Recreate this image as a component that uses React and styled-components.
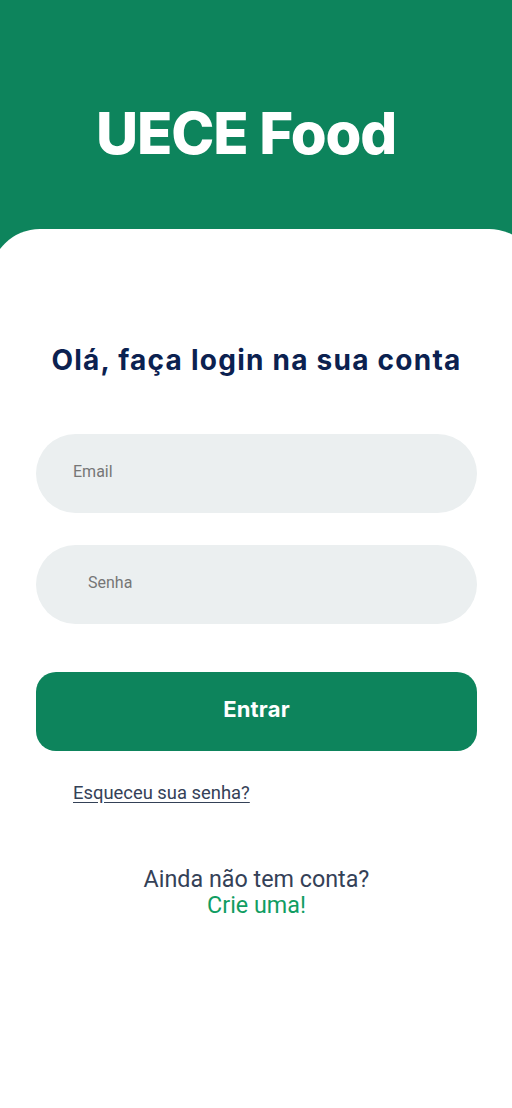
import React from "react";
import styled, { createGlobalStyle } from "styled-components";

const Global = createGlobalStyle`
  html, body { margin: 0; padding: 0; background: #ffffff; }
  body { font-family: Roboto, "Liberation Sans", sans-serif; overflow-x: hidden; }
  * { box-sizing: border-box; }
`;

const Page = styled.div`
  width: 512px;
  min-height: 1108px;
  background: #0d845c;
  display: flex;
  flex-direction: column;
  overflow: hidden;
`;

const Header = styled.header`
  height: 229px;
  padding: 98px 0 0 96px;
`;

const Brand = styled.h1`
  margin: 0;
  font-family: Inter, "Noto Sans", sans-serif;
  font-weight: 800;
  font-size: 58px;
  line-height: 70px;
  letter-spacing: -1.1px;
  color: #ffffff;
`;

const Panel = styled.main`
  flex: 1;
  margin: 0 -27px 0 -10px;
  padding: 0 62px 0 46px;
  background: #ffffff;
  border-radius: 50px 50px 0 0;
  display: flex;
  flex-direction: column;
`;

const Heading = styled.h2`
  margin: 111px 0 0;
  text-align: center;
  font-family: Inter, "Noto Sans", sans-serif;
  font-weight: 700;
  font-size: 28px;
  line-height: 40px;
  letter-spacing: 1.25px;
  color: #0b2150;
`;

const Form = styled.form`
  margin-top: 54px;
  display: flex;
  flex-direction: column;
`;

const Field = styled.input`
  height: 79px;
  border: none;
  outline: none;
  border-radius: 40px;
  background: #ebeff0;
  padding: 0 20px 4px ${(p) => p.$indent}px;
  font-family: Roboto, "Liberation Sans", sans-serif;
  font-size: 16px;
  color: #333;
  margin-bottom: ${(p) => p.$after}px;
  &::placeholder { color: #767676; }
`;

const Submit = styled.button`
  height: 79px;
  border: none;
  border-radius: 20px;
  background: #0d845c;
  color: #ffffff;
  font-family: Inter, "Noto Sans", sans-serif;
  font-weight: 700;
  font-size: 22px;
  letter-spacing: 0.2px;
  padding-bottom: 6px;
  cursor: pointer;
`;

const Forgot = styled.a`
  margin: 30px 0 0 37px;
  align-self: flex-start;
  font-family: Roboto, "Liberation Sans", sans-serif;
  font-size: 18.4px;
  line-height: 24px;
  color: #344157;
  text-decoration: underline;
  text-underline-offset: 3px;
`;

const SignUp = styled.p`
  margin: 61px 0 0;
  text-align: center;
  font-family: Roboto, "Liberation Sans", sans-serif;
  font-weight: 400;
  font-size: 23.3px;
  line-height: 26px;
  color: #344157;
`;

const SignUpLink = styled.a`
  display: block;
  color: #109d62;
  text-decoration: none;
`;

export default function App() {
  return (
    <>
      <Global />
      <Page>
        <Header>
          <Brand>UECE Food</Brand>
        </Header>
        <Panel>
          <Heading>Olá, faça login na sua conta</Heading>
          <Form onSubmit={(e) => e.preventDefault()}>
            <Field type="email" placeholder="Email" $indent={37} $after={32} />
            <Field type="password" placeholder="Senha" $indent={52} $after={48} />
            <Submit type="submit">Entrar</Submit>
          </Form>
          <Forgot href="#">Esqueceu sua senha?</Forgot>
          <SignUp>
            Ainda não tem conta?
            <SignUpLink href="#">Crie uma!</SignUpLink>
          </SignUp>
        </Panel>
      </Page>
    </>
  );
}
